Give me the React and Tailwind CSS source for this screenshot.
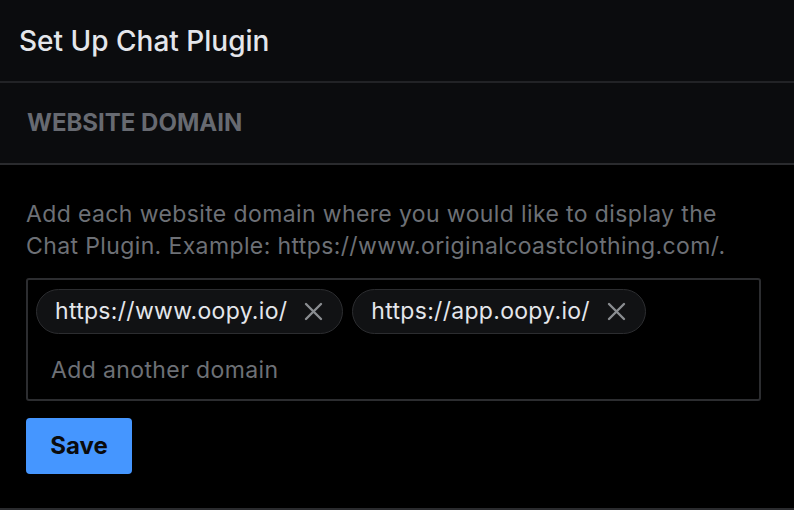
import React from "react";

// Small close icon for domain chips.
function CloseIcon() {
    return (
        <svg width="21" height="21" viewBox="0 0 21 21" fill="none" stroke="currentColor" strokeWidth="2.4" strokeLinecap="round">
            <path d="M3 3 L18 18 M18 3 L3 18" />
        </svg>
    );
}

function Chip({ label }) {
    return (
        <div className="flex items-center h-[45px] pl-[18px] pr-[18px] rounded-full bg-[#111214] border border-[#2c2d30]">
            <span className="text-[23px] text-[#e4e6eb] leading-none tracking-[0.3px]">{label}</span>
            <span className="ml-[16px] text-[#8a8d91] flex items-center">
                <CloseIcon />
            </span>
        </div>
    );
}

export default function App() {
    const domains = ["https://www.oopy.io/", "https://app.oopy.io/"];

    return (
        <div className="w-[794px] h-[510px] bg-black overflow-hidden" style={{ fontFamily: "Inter, 'Noto Sans', sans-serif" }}>
            {/* Header */}
            <div className="h-[83px] bg-[#0b0c0e] flex items-center pl-[19px] border-b-2 border-[#222326]">
                <h1 className="text-[28px] font-medium text-[#e4e6eb] leading-none">Set Up Chat Plugin</h1>
            </div>
            {/* Section title */}
            <div className="h-[82px] bg-[#0b0c0e] flex items-center pl-[27px] border-b-2 border-[#2a2b2e]">
                <p className="text-[24px] font-bold text-[#676a71] leading-none">WEBSITE DOMAIN</p>
            </div>
            {/* Body */}
            <div className="h-[345px] px-[26px] pt-[33px] border-b-2 border-[#2a2b2e]">
                <p className="w-[740px] text-[23px] leading-[32px] text-[#6d7076] tracking-[0.38px]">
                    Add each website domain where you would like to display the Chat Plugin. Example: https://www.originalcoastclothing.com/.
                </p>
                <div className="mt-[16px] w-[735px] h-[123px] rounded-[3px] border-2 border-[#2c2d30] px-[8px] pt-[9px]">
                    <div className="flex gap-[9px]">
                        {domains.map((d, i) => (
                            <Chip key={i} label={d} />
                        ))}
                    </div>
                    <div className="mt-[25px] pl-[15px] text-[23px] text-[#6d7076] leading-none tracking-[0.38px]">Add another domain</div>
                </div>
                <button className="mt-[17px] w-[106px] h-[56px] rounded-[4px] bg-[#4596ff] text-[24px] font-bold text-[#0a0b0d]">
                    Save
                </button>
            </div>
        </div>
    );
}
